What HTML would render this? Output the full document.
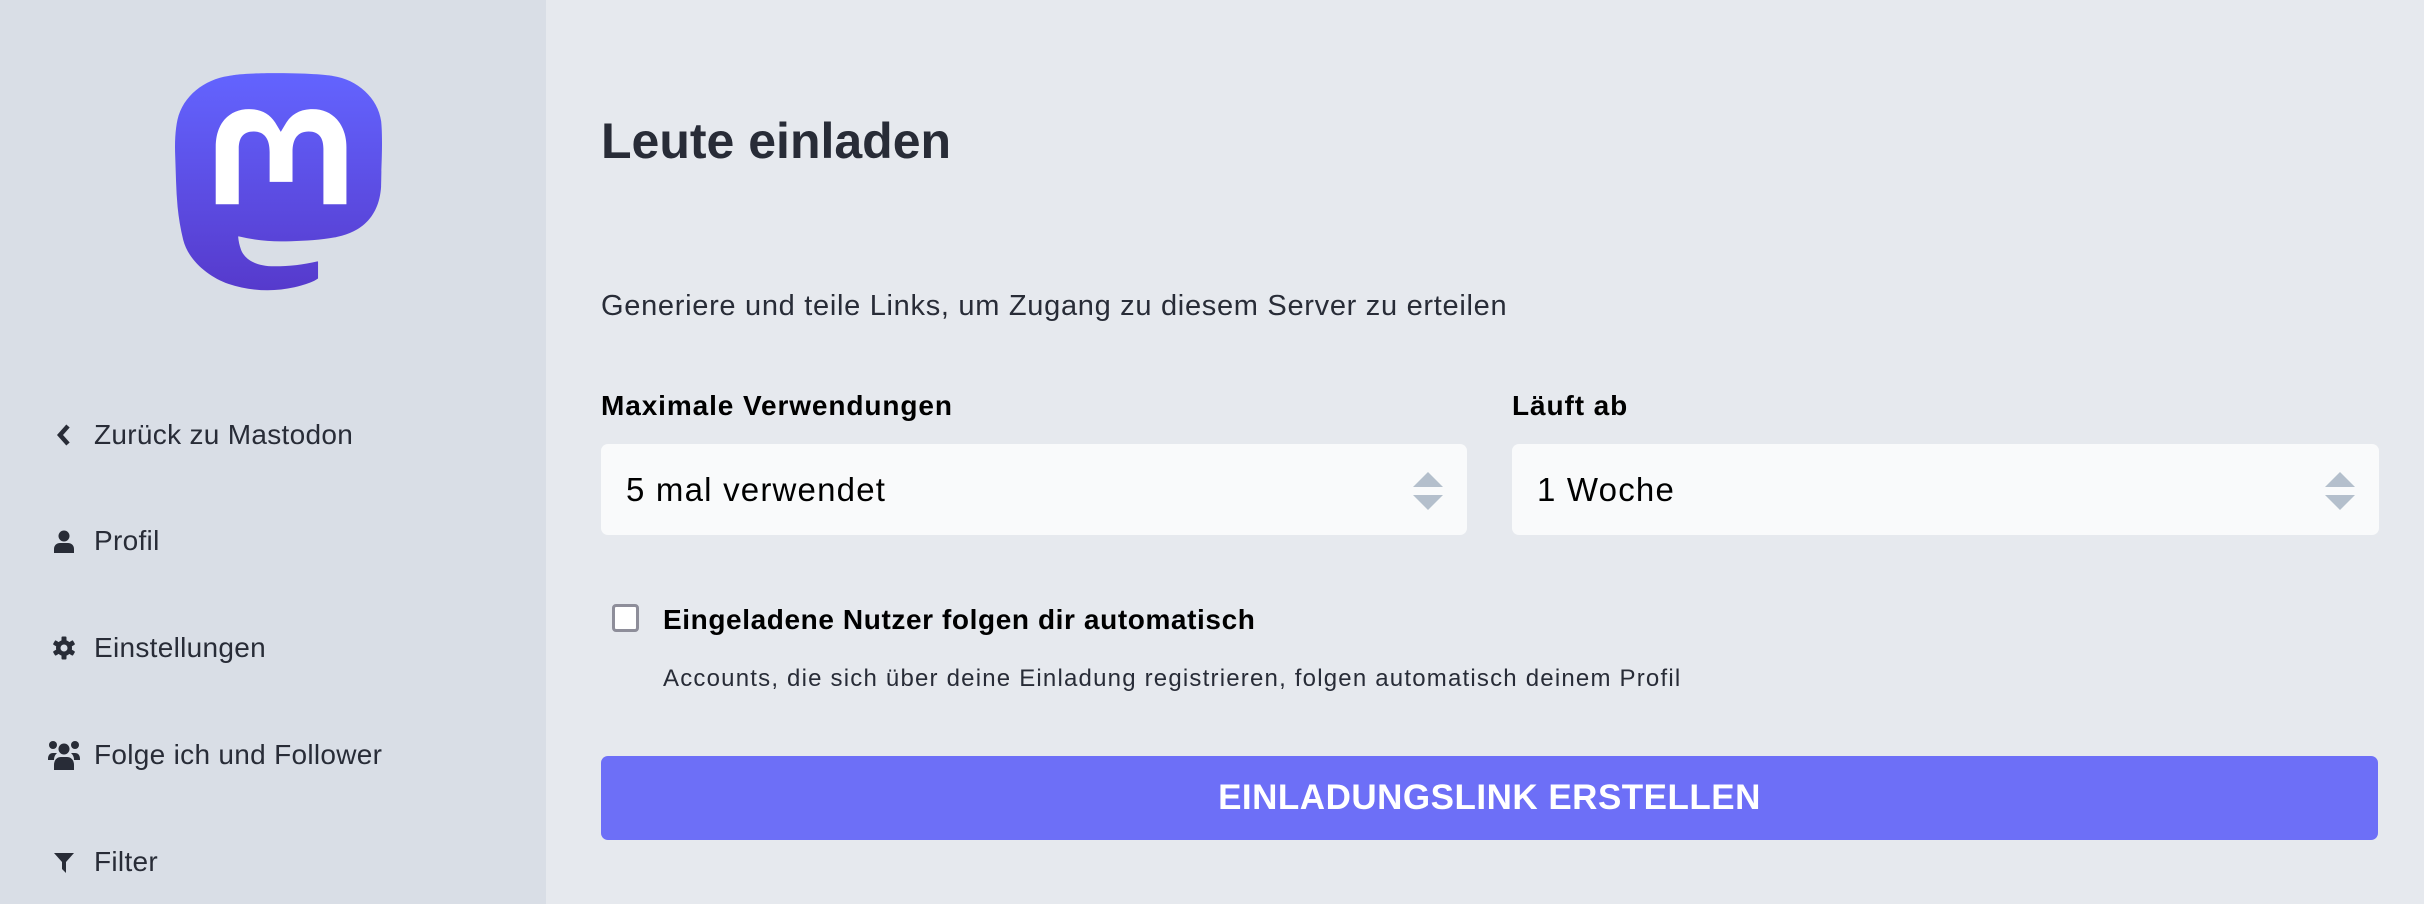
<!DOCTYPE html>
<html><head><meta charset="utf-8"><style>
*{margin:0;padding:0;box-sizing:border-box}
body{width:2424px;height:904px;overflow:hidden;font-family:"Liberation Sans",sans-serif;background:#e6e9ee;color:#282c37;position:relative}
.side{position:absolute;left:0;top:0;width:546px;height:904px;background:#d9dee6}
.logo{position:absolute;left:175px;top:71px;width:207px;height:221px}
.nav{position:absolute;left:94px;font-size:28px;color:#282c37;line-height:36px;height:36px;letter-spacing:0.3px}
.nav svg{position:absolute;left:-42px;top:6px}
.abs{position:absolute}
h1{position:absolute;left:601px;top:112px;font-size:50px;font-weight:bold;color:#282c37;white-space:nowrap}
.desc{left:601px;top:290px;font-size:29px;letter-spacing:0.7px;white-space:nowrap}
.lbl{font-size:28px;font-weight:bold;color:#000;top:390px;white-space:nowrap;letter-spacing:0.9px}
.sel{top:444px;height:91px;background:#f9fafb;border-radius:7px;font-size:33px;letter-spacing:1.2px;color:#000;padding-left:25px;line-height:91px}
.sel .arr{position:absolute;right:24px;top:28px}
.cb{left:612px;top:604px;width:27px;height:28px;border:3px solid #8e8e9a;border-radius:4px;background:#fff}
.cbl{left:663px;top:604px;font-size:28px;letter-spacing:0.6px;font-weight:bold;color:#000;white-space:nowrap}
.hint{left:663px;top:665px;font-size:24px;letter-spacing:1.2px;color:#282c37;white-space:nowrap}
.btn{left:601px;top:756px;width:1777px;height:84px;background:#6d6ff7;border-radius:7px;color:#fff;font-size:35px;letter-spacing:0.5px;font-weight:bold;text-align:center;line-height:84px}
</style></head><body>
<div class="side">
<svg class="logo" viewBox="0 0 74 79"><defs><linearGradient id="g" x1="0" y1="0" x2="0" y2="1"><stop offset="0" stop-color="#6364FF"/><stop offset="1" stop-color="#563ACC"/></linearGradient></defs>
<path fill="url(#g)" d="M73.7014 17.9592C72.5616 9.62034 65.1774 3.04876 56.424 1.77536C54.9472 1.56019 49.3517 0.7771 36.3901 0.7771H36.2933C23.3281 0.7771 20.5465 1.56019 19.0697 1.77536C10.56 3.01348 2.78877 8.91838 0.903306 17.356C-0.00357857 21.5113 -0.100361 26.1181 0.068112 30.3439C0.308275 36.404 0.354874 42.4535 0.91406 48.489C1.30064 52.498 1.97502 56.4751 2.93215 60.3905C4.72441 67.6217 11.9795 73.6395 19.0876 76.0945C26.6979 78.6548 34.8821 79.0799 42.724 77.3221C43.5866 77.1245 44.4398 76.8953 45.2833 76.6342C47.1867 76.0381 49.4199 75.3714 51.0616 74.2003C51.0841 74.1839 51.1026 74.1627 51.1156 74.1382C51.1286 74.1138 51.1359 74.0868 51.1368 74.0592V68.2108C51.1364 68.185 51.1302 68.1596 51.1185 68.1365C51.1069 68.1134 51.0902 68.0932 51.0695 68.0773C51.0489 68.0614 51.0249 68.0503 50.9994 68.0447C50.9738 68.0391 50.9473 68.0392 50.9218 68.045C45.8976 69.226 40.7491 69.818 35.5836 69.8087C26.694 69.8087 24.3031 65.6569 23.6184 63.9285C23.0681 62.4347 22.7186 60.8764 22.5789 59.2934C22.5775 59.2669 22.5825 59.2403 22.5934 59.216C22.6043 59.1916 22.621 59.1702 22.6419 59.1533C22.6629 59.1365 22.6876 59.1248 22.714 59.1191C22.7404 59.1134 22.7678 59.1139 22.794 59.1206C27.7345 60.2936 32.799 60.8856 37.8813 60.8843C39.1036 60.8843 40.3223 60.8843 41.5447 60.8526C46.6562 60.7115 52.0437 60.454 57.0728 59.4874C57.1983 59.4628 57.3237 59.4416 57.4313 59.4098C65.3638 57.9107 72.9128 53.2051 73.6799 41.2895C73.7086 40.8204 73.7803 36.3758 73.7803 35.889C73.7839 34.2347 74.3216 24.1533 73.7014 17.9592Z"/>
<path fill="#fff" d="M61.2826 27.2337V47.6182H53.0549V27.8323C53.0549 23.6953 51.3193 21.6183 47.8133 21.6183C43.9549 21.6183 42.0106 24.0882 42.0106 28.9736V39.6346H33.8286V28.9736C33.8286 24.0882 31.8843 21.6183 28.0259 21.6183C24.5199 21.6183 22.7843 23.6953 22.7843 27.8323V47.6182H14.5566V27.2337C14.5566 23.0631 15.6236 19.7556 17.7576 17.3111C19.9647 14.8666 22.8559 13.6152 26.4361 13.6152C30.5783 13.6152 33.7201 15.2003 35.7809 18.3715L37.8168 21.7413L39.8526 18.3715C41.9134 15.2003 45.0552 13.6152 49.1974 13.6152C52.7776 13.6152 55.6688 14.8666 57.8759 17.3111C60.0099 19.7556 61.2826 23.0631 61.2826 27.2337Z"/></svg>
<div class="nav" style="top:417px"><svg width="24" height="24" viewBox="0 0 24 24"><path d="M16 3L8 12l8 9" fill="none" stroke="#282c37" stroke-width="4.5" stroke-linejoin="miter"/></svg>Zurück zu Mastodon</div>
<div class="nav" style="top:523px"><svg width="24" height="24" viewBox="0 0 24 24"><circle cx="12" cy="7" r="5.5" fill="#282c37"/><path d="M2 24v-4c0-4 3-6 6-6h8c3 0 6 2 6 6v4z" fill="#282c37"/></svg>Profil</div>
<div class="nav" style="top:630px"><svg width="24" height="24" viewBox="0 0 24 24"><g fill="#282c37"><circle cx="12" cy="12" r="8"/><rect x="9.5" y="0.5" width="5" height="23" rx="1"/><rect x="9.5" y="0.5" width="5" height="23" rx="1" transform="rotate(60 12 12)"/><rect x="9.5" y="0.5" width="5" height="23" rx="1" transform="rotate(120 12 12)"/></g><circle cx="12" cy="12" r="3.5" fill="#d9dee6"/></svg>Einstellungen</div>
<div class="nav" style="top:737px"><svg width="32" height="30" viewBox="0 0 32 30" style="left:-46px;top:3px"><g fill="#282c37"><circle cx="5" cy="5" r="4"/><circle cx="27" cy="5" r="4"/><circle cx="16" cy="9" r="5.5"/><path d="M0 19c0-4 2-6 5-6h4c-2 2-3 4-3 7H0z"/><path d="M32 19c0-4-2-6-5-6h-4c2 2 3 4 3 7h6z"/><path d="M6 30v-5c0-5 3-8 7-8h6c4 0 7 3 7 8v5z"/></g></svg>Folge ich und Follower</div>
<div class="nav" style="top:844px"><svg width="24" height="24" viewBox="0 0 24 24"><path d="M2 3h20l-8 9v11l-4-4v-7z" fill="#282c37"/></svg>Filter</div>
</div>
<h1>Leute einladen</h1>
<div class="abs desc">Generiere und teile Links, um Zugang zu diesem Server zu erteilen</div>
<div class="abs lbl" style="left:601px">Maximale Verwendungen</div>
<div class="abs lbl" style="left:1512px">Läuft ab</div>
<div class="abs sel" style="left:601px;width:866px">5 mal verwendet<svg class="arr" width="30" height="38" viewBox="0 0 30 38"><path d="M15 0L30 15H0z M0 23H30L15 38z" fill="#b4bfcc"/></svg></div>
<div class="abs sel" style="left:1512px;width:867px">1 Woche<svg class="arr" width="30" height="38" viewBox="0 0 30 38"><path d="M15 0L30 15H0z M0 23H30L15 38z" fill="#b4bfcc"/></svg></div>
<div class="abs cb"></div>
<div class="abs cbl">Eingeladene Nutzer folgen dir automatisch</div>
<div class="abs hint">Accounts, die sich über deine Einladung registrieren, folgen automatisch deinem Profil</div>
<div class="abs btn">EINLADUNGSLINK ERSTELLEN</div>
</body></html>
